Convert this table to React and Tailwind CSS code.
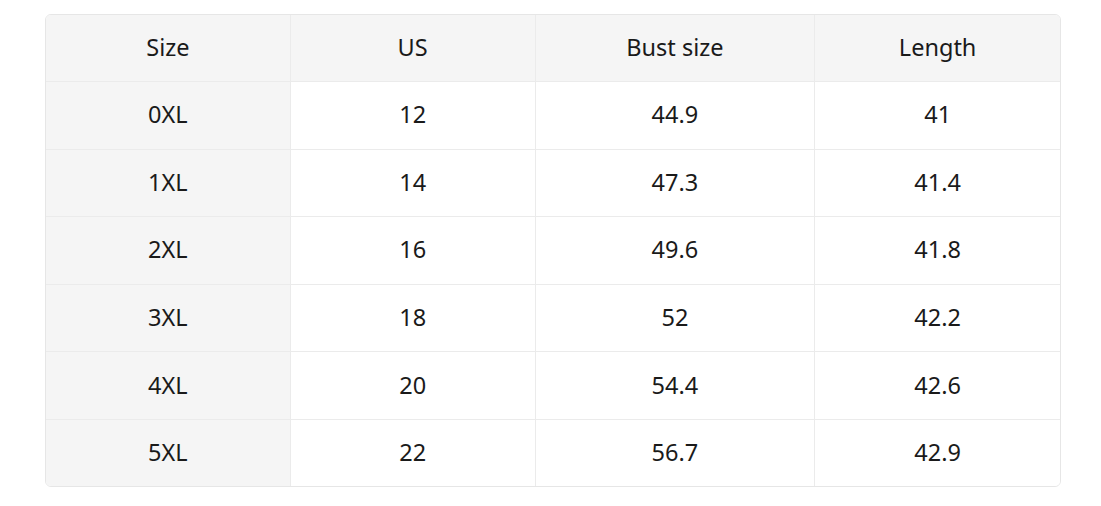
export default function App() {
  const header = ["Size", "US", "Bust size", "Length"];
  const rows = [
    ["0XL", "12", "44.9", "41"],
    ["1XL", "14", "47.3", "41.4"],
    ["2XL", "16", "49.6", "41.8"],
    ["3XL", "18", "52", "42.2"],
    ["4XL", "20", "54.4", "42.6"],
    ["5XL", "22", "56.7", "42.9"],
  ];
  const widths = ["w-[245px]", "w-[245px]", "w-[280px]", "w-[245px]"];
  return (
    <div className="bg-white w-[1101px] h-[506px] pt-[14px] pl-[45px]" style={{ fontFamily: '"Noto Sans", "Open Sans", sans-serif' }}>
      <div className="w-[1016px] border border-[#e6e6e6] rounded-[6px] overflow-hidden">
        <div className="flex h-[67px] bg-[#f5f5f5] border-b border-[#ebebeb]">
          {header.map((h, i) => (
            <div key={i} className={`${widths[i]} flex items-center justify-center pb-[1px] text-[23.5px] text-[#1a1a1a] ${i < 3 ? "border-r border-[#ebebeb]" : ""}`}>{h}</div>
          ))}
        </div>
        {rows.map((r, ri) => (
          <div key={ri} className={`flex ${ri < rows.length - 1 ? "h-[67.6px] border-b border-[#ebebeb]" : "h-[66.5px]"}`}>
            {r.map((c, i) => (
              <div key={i} className={`${widths[i]} flex items-center justify-center pb-[1px] text-[23.5px] text-[#1a1a1a] ${i === 0 ? "bg-[#f5f5f5]" : "bg-white"} ${i < 3 ? "border-r border-[#ebebeb]" : ""}`}>{c}</div>
            ))}
          </div>
        ))}
      </div>
    </div>
  );
}
